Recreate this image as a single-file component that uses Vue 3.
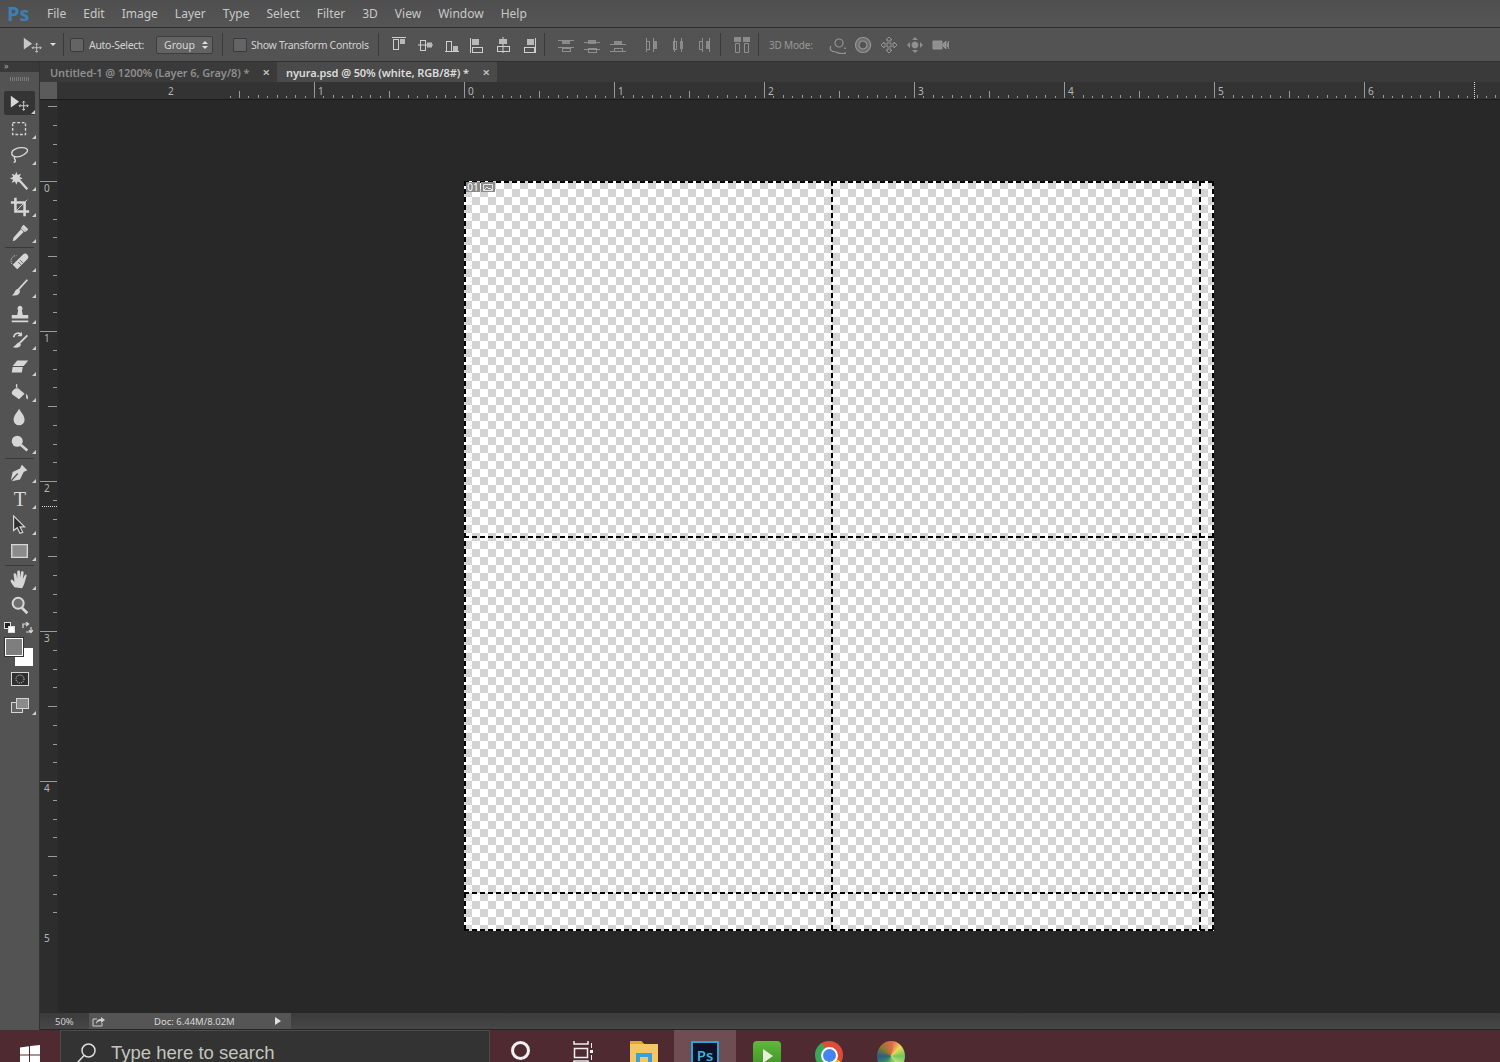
<script setup>
const menus = ['File', 'Edit', 'Image', 'Layer', 'Type', 'Select', 'Filter', '3D', 'View', 'Window', 'Help']

// photoshop tool strip, grouped like the real panel
const toolGroups = [
  [
    { corner: true, active: true, parts: [{ d: 'M2 4v13l9-6.500z', fill: 1 }, { d: 'M16 10v10M11 15h10M14.500 11.500l1.500-1.500 1.500 1.500M14.500 18.500l1.500 1.500 1.500-1.500M12.500 13.500l-1.500 1.500 1.500 1.500M19.500 13.500l1.500 1.500-1.500 1.500', sw: 1 }] },
    { corner: true, parts: [{ d: 'M4 5h14v13H4z', sw: 1.500, dash: '3 2' }] },
    { corner: true, parts: [{ d: 'M3 10c0-4 6-6 11-6s7 2 6 4-6 6-11 6-6-2-6-4zM6 14c-1 2 1 3 1 4s-1 2-2 2', sw: 1.500 }] },
    { corner: true, parts: [{ d: 'M8 2l1.500 3.500L13 4l-1.500 3.500L15 9l-3.500 1.500L13 14l-3.500-1.500L8 16l-1.500-3.500L3 14l1.500-3.500L1 9l3.500-1.500L3 4l3.500 1.500z', fill: 1 }, { d: 'M11 11l9 10', sw: 2.500 }] },
    { corner: true, parts: [{ d: 'M7 2v15h15M2 7h15v15', sw: 2.800 }, { d: 'M7 17L20 4', sw: 1 }] },
    { corner: true, parts: [{ d: 'M14 5l5 5-2 1-4-4zM13 8l3 3-9 9-3 1 1-4z', fill: 1 }, { d: 'M16 3l5 5-2 2-5-5z', fill: 1 }] },
  ],
  [
    { corner: true, parts: [{ d: 'M9 20l-5-5L15 4c2-2 4-1 5 0s2 3 0 5z', fill: 1 }, { d: 'M3 14c-2-4 0-9 5-9', sw: 1, dash: '1 1' }, { d: 'M10 12l3 3M12 10l3 3', sw: 1, dark: 1 }] },
    { corner: true, parts: [{ d: 'M20 3L10 14', sw: 2 }, { d: 'M10 13c-4 0-3 5-7 7 6 1 9-1 9-5z', fill: 1 }] },
    { corner: true, parts: [{ d: 'M12 3a3 3 0 0 1 2 5l1 5h6v4H3v-4h6l1-5a3 3 0 0 1 2-5zM3 19h18v2H3z', fill: 1 }] },
    { corner: true, parts: [{ d: 'M5 9c1-5 7-6 9-2', sw: 1.800 }, { d: 'M14 3v5H9z', fill: 1 }, { d: 'M20 7L11 16', sw: 2 }, { d: 'M11 15c-3 0-3 3-7 5 5 1 9 0 9-3z', fill: 1 }] },
    { corner: true, parts: [{ d: 'M9 6h12l-5 6H4z', fill: 1 }, { d: 'M4 13h11l-1 6H3z', fill: 1 }] },
    { corner: true, parts: [{ d: 'M9 7l8 7-6 6-7-5c-2-2-1-5 5-8zM9 3c-2 0-2 4 0 6', fill: 1 }, { d: 'M19 14c2 2 2 6 1 6s-2-3-1-6z', fill: 1 }] },
    { corner: false, parts: [{ d: 'M11 2c3 5 6 8 6 12a6 6 0 0 1-12 0c0-4 3-7 6-12z', fill: 1 }] },
    { corner: true, parts: [{ d: 'M9 3a6 6 0 1 1 0 12A6 6 0 0 1 9 3z', fill: 1 }, { d: 'M13 13l7 6', sw: 2.800 }] },
  ],
  [
    { corner: true, parts: [{ d: 'M14 3l6 6-4 2-4 8-9 2 7-8-1-1-7 8 2-9 8-4z', fill: 1 }] },
    { corner: true, parts: [{ text: 'T' }] },
    { corner: true, parts: [{ d: 'M5 2v16l4-3 3 6 3-1-3-6h5z', sw: 1.300, darkFill: 1 }] },
    { corner: true, parts: [{ d: 'M3 5h17v14H3z', rectFill: 1 }] },
  ],
  [
    { corner: true, parts: [{ d: 'M6 20c-2-3-5-6-4-8s3 1 4 2l-1-8c0-2 2-2 3 0l1 5V3c0-2 3-2 3 0v7l1-6c0-2 3-2 3 0l-1 7 2-4c1-2 3-1 2 1l-2 7c-1 3-2 5-3 6z', fill: 1 }] },
    { corner: false, parts: [{ d: 'M10 3a6 6 0 1 1 0 12A6 6 0 0 1 10 3z', sw: 2.200, glass: 1 }, { d: 'M14 14l6 6', sw: 3 }] },
  ],
]

const alignIcons = [
  [
    { line: 'M1 1.500h14', box: [2, 3, 5, 10], solid: [9, 3, 5, 5] },
    { line: 'M1 9h15', box: [3, 4, 5, 10], solid: [10, 6.500, 5, 5] },
    { line: 'M2 15.500h14', box: [3, 5, 5, 10], solid: [10, 10, 5, 5] },
  ],
  [
    { line: 'M2.500 2v15', box: [4, 11, 10, 5], solid: [4, 3, 7, 6] },
    { line: 'M9 1v16', box: [3, 10, 12, 5], solid: [5, 3, 8, 5] },
    { line: 'M15.500 2v15', box: [4, 11, 10, 5], solid: [7, 3, 7, 6] },
  ],
]
const distIcons = [
  [
    { line: 'M1 4.500h16M1 11.500h16', box: [5, 12, 8, 3], solid: [5, 5, 8, 3] },
    { line: 'M1 6.500h16M1 13.500h16', box: [5, 12, 8, 4], solid: [5, 4, 8, 4] },
    { line: 'M1 8.500h16M1 15.500h16', box: [5, 12, 8, 3], solid: [5, 5, 8, 3] },
  ],
  [
    { line: 'M3.500 2v14M10.500 2v14', box: [3, 5, 3, 8], solid: [11, 5, 3, 8] },
    { line: 'M5.500 2v14M12.500 2v14', box: [4, 5, 3, 8], solid: [11, 5, 3, 8] },
    { line: 'M7.500 2v14M14.500 2v14', box: [4, 5, 3, 8], solid: [11, 5, 3, 8] },
  ],
]

const objects3d = [
  { d: 'M3 10c-2 3 0 6 5 6 3 2 9 2 11 0 1-2 0-4-3-4M7 7a4 4 0 1 1 8 0 4 4 0 0 1-8 0z', sw: 1.200 },
  { d: 'M9 1.500a7.500 7.500 0 1 0 .1 0zM9 5a4 4 0 1 1-.1 0z', sw: 1.200, fill: 1 },
  { d: 'M9 1l3 3h-2v4h4V6l3 3-3 3v-2h-4v4h2l-3 3-3-3h2v-4H4v2L1 9l3-3v2h4V4H6z', sw: 1 },
  { d: 'M9 1l3 3H6zM9 17l-3-3h6zM1 9l3-3v6zM17 9l-3 3V6zM9 5.500a3.500 3.500 0 1 1-.1 0z', solid: 1 },
  { d: 'M1 5h9v8H1zM11 8l3-3v8l-3-3zM17 5l-2 4 2 4', cam: 1 },
]

const INCH = 150
const SIXTEENTH = INCH / 16

// x of ruler origin sits at 464 on screen, ruler svg begins at 40
const hOrigin = 424
const hTicks = []
for (let i = -25; i < 160; i++) {
  const x = hOrigin + i * SIXTEENTH
  if (x < 17) continue
  const n = ((i % 16) + 16) % 16
  const len = n === 0 ? 17 : n === 8 ? 8 : n % 2 === 0 ? 4 : 3
  hTicks.push({ x: Math.round(x) + 0.5, len })
}
const hLabels = [-2, -1, 0, 1, 2, 3, 4, 5, 6].map((n) => ({
  x: hOrigin + n * INCH + 4,
  text: Math.abs(n),
}))

// y of origin is 181 on screen, svg begins at 100
const vOrigin = 81
const vTicks = []
for (let i = -4; i < 40; i++) {
  const y = vOrigin + i * (INCH / 8)
  if (y < 0 || y > 913) continue
  const n = ((i % 8) + 8) % 8
  const len = n === 0 ? 17 : n === 4 ? 9 : 4
  vTicks.push({ y: Math.round(y) + 0.5, len })
}
const vLabels = [0, 1, 2, 3, 4, 5].map((n) => ({ y: vOrigin + n * INCH + 11, text: n }))

const sliceLines = [
  { x1: 368, y1: 0, x2: 368, y2: 750 },
  { x1: 736, y1: 0, x2: 736, y2: 750 },
  { x1: 0, y1: 356, x2: 750, y2: 356 },
  { x1: 0, y1: 712, x2: 750, y2: 712 },
  { x1: 1, y1: 0, x2: 1, y2: 750 },
  { x1: 749, y1: 0, x2: 749, y2: 750 },
  { x1: 0, y1: 1, x2: 750, y2: 1 },
  { x1: 0, y1: 749, x2: 750, y2: 749 },
]
</script>

<template>
  <div class="app">
    <header class="menubar">
      <span class="logo">Ps</span>
      <nav class="menus">
        <span v-for="m in menus" :key="m">{{ m }}</span>
      </nav>
    </header>

    <div class="optionsbar">
      <svg class="opt-move" width="22" height="22" viewBox="0 0 24 24">
        <path d="M2 4v13l9-6.500z" fill="#c8c8c8" />
        <path d="M16 10v10M11 15h10M14.500 11.500l1.500-1.500 1.500 1.500M14.500 18.500l1.500 1.500 1.500-1.500M12.500 13.500l-1.500 1.500 1.500 1.500M19.500 13.500l1.500 1.500-1.500 1.500" fill="none" stroke="#c8c8c8" />
      </svg>
      <span class="caret"></span>
      <i class="sep sep-a"></i>
      <span class="check"></span>
      <span class="opt-label auto">Auto-Select:</span>
      <span class="dropdown">Group<span class="updown"><b></b><b></b></span></span>
      <i class="sep sep-b"></i>
      <span class="check check-b"></span>
      <span class="opt-label show">Show Transform Controls</span>
      <i class="sep sep-c"></i>

      <div v-for="(grp, g) in alignIcons" :key="'a' + g" class="icon-group" :class="{ first: g === 0 }">
        <svg v-for="(ic, i) in grp" :key="i" width="18" height="18" viewBox="0 0 18 18" class="opt-icon">
          <path :d="ic.line" stroke="#d0d0d0" fill="none" />
          <rect :x="ic.box[0] + 0.5" :y="ic.box[1] + 0.5" :width="ic.box[2]" :height="ic.box[3]" fill="none" stroke="#cfcfcf" />
          <rect :x="ic.solid[0]" :y="ic.solid[1]" :width="ic.solid[2]" :height="ic.solid[3]" fill="#b9b9b9" />
        </svg>
      </div>
      <i class="sep sep-d"></i>

      <div v-for="(grp, g) in distIcons" :key="'d' + g" class="icon-group" :class="g === 0 ? 'dist-first' : 'dist-next'">
        <svg v-for="(ic, i) in grp" :key="i" width="18" height="18" viewBox="0 0 18 18" class="opt-icon">
          <path :d="ic.line" stroke="#8f8f8f" fill="none" />
          <rect :x="ic.box[0] + 0.5" :y="ic.box[1] + 0.5" :width="ic.box[2]" :height="ic.box[3]" fill="none" stroke="#8f8f8f" />
          <rect :x="ic.solid[0]" :y="ic.solid[1]" :width="ic.solid[2]" :height="ic.solid[3]" fill="#8a8a8a" />
        </svg>
      </div>
      <i class="sep sep-e"></i>

      <svg class="opt-icon auto-align" width="18" height="18" viewBox="0 0 18 18">
        <rect x="1" y="1" width="7" height="5" fill="#8a8a8a" />
        <rect x="10" y="1" width="7" height="5" fill="#8a8a8a" />
        <path d="M2.500 7.500h4v9h-4zM11.500 7.500h4v9h-4z" fill="none" stroke="#8f8f8f" />
      </svg>
      <i class="sep sep-f"></i>
      <span class="mode-label">3D Mode:</span>
      <svg v-for="(o, i) in objects3d" :key="i" class="obj3d" width="18" height="18" viewBox="0 0 18 18">
        <path
          :d="o.d"
          :fill="o.solid || o.cam ? '#8f8f8f' : o.fill ? '#6e6e6e' : 'none'"
          :stroke="o.solid ? 'none' : '#959595'"
          :stroke-width="o.sw || 1"
        />
      </svg>
    </div>

    <div class="workspace">
      <aside class="toolstrip">
        <div class="strip-head">
          <span class="chev">»</span>
        </div>
        <div class="strip-grip"></div>

        <template v-for="(group, g) in toolGroups" :key="g">
          <i v-if="g > 0" class="tool-sep"></i>
          <div v-for="(tool, t) in group" :key="t" class="tool" :class="{ active: tool.active }">
            <svg width="22" height="22" viewBox="0 0 24 24" class="tool-icon">
              <template v-for="(p, k) in tool.parts" :key="k">
                <text v-if="p.text" x="12" y="20" class="type-t" text-anchor="middle">{{ p.text }}</text>
                <path
                  v-else
                  :d="p.d"
                  :fill="p.fill ? '#d6d6d6' : p.darkFill ? '#2e2e2e' : p.rectFill ? '#8b8b8b' : p.glass ? '#6f6f6f' : 'none'"
                  :stroke="p.fill ? 'none' : p.dark ? '#555' : '#d6d6d6'"
                  :stroke-width="p.sw || 1.500"
                  :stroke-dasharray="p.dash || null"
                />
              </template>
            </svg>
            <span v-if="tool.corner" class="corner"></span>
          </div>
        </template>

        <div class="swatch-tools">
          <span class="mini-default"><b></b><b></b></span>
          <svg width="12" height="12" viewBox="0 0 12 12">
            <path d="M2 6V2h5M5 0L7.500 2 5 4M10 5v5H5M8 8l2 2.500L12 8" fill="none" stroke="#ddd" stroke-width="1.200" />
          </svg>
        </div>
        <div class="swatches">
          <span class="bg-swatch"></span>
          <span class="fg-swatch"></span>
        </div>
        <div class="tool">
          <svg width="18" height="14" viewBox="0 0 18 14">
            <rect x="0.500" y="0.500" width="17" height="13" fill="#2f2f2f" stroke="#d6d6d6" />
            <circle cx="9" cy="7" r="4" fill="none" stroke="#ddd" stroke-dasharray="1 1" />
          </svg>
        </div>
        <div class="tool">
          <svg width="18" height="15" viewBox="0 0 18 15">
            <rect x="0.500" y="4.500" width="11" height="10" fill="#666" stroke="#d6d6d6" />
            <rect x="5.500" y="0.500" width="12" height="10" fill="#8b8b8b" stroke="#d6d6d6" />
          </svg>
          <span class="corner"></span>
        </div>
      </aside>

      <div class="document">
        <div class="tabs">
          <div class="tab">
            <span class="tab-title">Untitled-1 @ 1200% (Layer 6, Gray/8) *</span>
            <span class="tab-close">×</span>
          </div>
          <div class="tab current">
            <span class="tab-title">nyura.psd @ 50% (white, RGB/8#) *</span>
            <span class="tab-close">×</span>
          </div>
        </div>

        <svg class="hruler" width="1460" height="18">
          <rect x="0" y="0" width="17" height="17" fill="#5b5b5b" />
          <path v-for="t in hTicks" :key="t.x" :d="`M${t.x} ${17 - t.len}V16`" stroke="#9a9a9a" />
          <text v-for="l in hLabels" :key="l.x" :x="l.x" y="13" class="rule-num">{{ l.text }}</text>
          <path d="M1434.500 0v17" stroke="#ddd" stroke-dasharray="1 1" />
        </svg>

        <div class="doc-body">
          <svg class="vruler" width="18" height="913">
            <path v-for="t in vTicks" :key="t.y" :d="`M${17 - t.len} ${t.y}H17`" stroke="#9a9a9a" />
            <text v-for="l in vLabels" :key="l.y" x="4" :y="l.y" class="rule-num">{{ l.text }}</text>
            <path d="M2 406.500H17" stroke="#ddd" stroke-dasharray="1 1" />
          </svg>
          <main class="pasteboard">
            <div class="canvas">
              <svg class="slices" width="750" height="750">
                <line
                  v-for="(s, i) in sliceLines"
                  :key="i"
                  :x1="s.x1"
                  :y1="s.y1"
                  :x2="s.x2"
                  :y2="s.y2"
                  stroke="#000"
                  stroke-width="2"
                  stroke-dasharray="5 3"
                />
              </svg>
              <div class="slice-badge">
                <span class="badge-num">01</span>
                <span class="badge-img">
                  <svg width="10" height="7" viewBox="0 0 10 7"><path d="M.500.500h9v6h-9zM1 6l3-3 2 2 1-1 2 2" fill="none" stroke="#fff" stroke-width=".8" /></svg>
                </span>
              </div>
            </div>
          </main>
        </div>

        <footer class="statusbar">
          <span class="zoom-val">50%</span>
          <div class="status-box">
            <svg width="14" height="11" viewBox="0 0 14 11">
              <path d="M1 3h4M1 3v7h9V7" fill="none" stroke="#ccc" />
              <path d="M4 8c0-3 2-5 5-5V1l4 3-4 3V5C7 5 5 6 4 8z" fill="#ccc" />
            </svg>
            <span class="doc-size">Doc: 6.44M/8.02M</span>
            <span class="status-arrow"></span>
          </div>
        </footer>
      </div>
    </div>

    <div class="taskbar">
      <div class="start">
        <svg width="20" height="20" viewBox="0 0 20 20"><path d="M0 2.500l9-1.200V9.500H0zM10 1.100L20 0v9.500H10zM0 10.500h9v8l-9-1.200zM10 10.500h10V20l-10-1.300z" fill="#fff" /></svg>
      </div>
      <div class="searchbox">
        <svg width="20" height="22" viewBox="0 0 20 22"><circle cx="11.500" cy="8.500" r="6.500" fill="none" stroke="#ddd" stroke-width="1.500" /><path d="M7 13.500L1 20" stroke="#ddd" stroke-width="1.500" /></svg>
        <span>Type here to search</span>
      </div>
      <div class="task cortana"><span class="ring"></span></div>
      <div class="task">
        <svg width="22" height="26" viewBox="0 0 22 26">
          <path d="M3 0v3h14V0M3.500 7.500h13v9h-13zM3 26v-6h14v6" fill="none" stroke="#eee" stroke-width="1.500" />
          <rect x="19" y="9" width="3" height="3" fill="#eee" /><path d="M20.500 2v5M20.500 14v5" stroke="#eee" />
        </svg>
      </div>
      <div class="task">
        <svg width="28" height="28" viewBox="0 0 28 28">
          <path d="M0 0h11l3 3h14v25H0z" fill="#f3c766" />
          <path d="M0 0h11l3 3H0z" fill="#e0a733" />
          <rect x="6" y="12" width="16" height="14" fill="#3fa0d8" />
          <rect x="10" y="16" width="8" height="6" fill="#f3c766" />
        </svg>
      </div>
      <div class="task running"><span class="ps-tile">Ps</span></div>
      <div class="task">
        <span class="green-tile"><svg width="12" height="16" viewBox="0 0 12 16"><path d="M1 1l10 7-10 7z" fill="#e6f2d8" /></svg></span>
      </div>
      <div class="task"><span class="chrome"><b></b></span></div>
      <div class="task"><span class="colorball"></span></div>
    </div>
  </div>
</template>

<style scoped>
.app {
  width: 1500px;
  height: 1062px;
  overflow: hidden;
  display: flex;
  flex-direction: column;
  font-family: "Noto Sans", "Open Sans", sans-serif;
  color: #cfcfcf;
  background: #282828;
}
.menubar {
  height: 28px;
  flex: none;
  display: flex;
  align-items: center;
  background: linear-gradient(#4f4f4f, #555);
  border-bottom: 1px solid #2e2e2e;
  box-sizing: border-box;
}
.logo {
  width: 47px;
  padding-left: 7px;
  box-sizing: border-box;
  font-family: "Open Sans", sans-serif;
  font-weight: 700;
  font-size: 20px;
  color: #3d7fb4;
}
.menus {
  display: flex;
  gap: 17px;
  font-size: 12px;
  color: #c9c9c9;
}
.optionsbar {
  height: 34px;
  flex: none;
  display: flex;
  align-items: center;
  background: #535353;
  border-bottom: 1px solid #2f2f2f;
  box-sizing: border-box;
  position: relative;
}
.opt-move { margin-left: 22px; }
.caret {
  width: 0;
  height: 0;
  margin-left: 6px;
  border: 3px solid transparent;
  border-top: 3px solid #ddd;
  border-bottom: 0;
}
.sep {
  width: 1px;
  height: 23px;
  background: #3a3a3a;
  flex: none;
}
.sep-a { margin-left: 7px; }
.sep-b { margin-left: 9px; }
.sep-c { margin-left: 14px; }
.sep-d { margin-left: 6px; }
.sep-e { margin-left: 7px; }
.sep-f { margin-left: 7px; }
.check {
  width: 12px;
  height: 12px;
  margin-left: 6px;
  border: 1px solid #3a3a3a;
  border-radius: 2px;
  background: #646464;
  flex: none;
}
.check-b { margin-left: 10px; }
.opt-label {
  font-size: 10.500px;
  letter-spacing: -0.300px;
  color: #d2d2d2;
  white-space: nowrap;
}
.auto { margin-left: 5px; width: 54px; }
.show { margin-left: 4px; width: 113px; }
.dropdown {
  width: 57px;
  height: 18px;
  margin-left: 13px;
  box-sizing: border-box;
  display: flex;
  align-items: center;
  justify-content: space-between;
  padding: 0 4px 0 7px;
  background: #636363;
  border: 1px solid #3d3d3d;
  border-radius: 2px;
  font-size: 10.500px;
  color: #d8d8d8;
}
.updown {
  display: flex;
  flex-direction: column;
  gap: 2px;
}
.updown b {
  width: 0;
  height: 0;
  border: 3px solid transparent;
  border-bottom: 3px solid #ddd;
  border-top: 0;
}
.updown b + b {
  border-top: 3px solid #ddd;
  border-bottom: 0;
}
.icon-group {
  display: flex;
  gap: 8px;
  margin-left: 7px;
}
.icon-group.first { margin-left: 12px; }
.icon-group.dist-first { margin-left: 12px; }
.icon-group.dist-next { margin-left: 16px; }
.auto-align { margin-left: 12px; }
.mode-label {
  margin-left: 10px;
  width: 43px;
  font-size: 10px;
  letter-spacing: -0.200px;
  color: #999;
  white-space: nowrap;
}
.obj3d { margin-left: 8px; }
.mode-label + .obj3d { margin-left: 16px; }

.workspace {
  flex: 1;
  display: flex;
  min-height: 0;
}
.toolstrip {
  width: 40px;
  flex: none;
  display: flex;
  flex-direction: column;
  box-sizing: border-box;
  background: #535353;
  border-right: 1px solid #333;
}
.strip-head {
  height: 10px;
  background: #3a3a3a;
  line-height: 8px;
  font-size: 9px;
  color: #aaa;
  padding-left: 4px;
}
.strip-grip {
  height: 18px;
  background: repeating-linear-gradient(90deg, #7a7a7a 0 1px, transparent 1px 2px) 10px 5px / 19px 4px no-repeat;
}
.tool {
  height: 26px;
  flex: none;
  position: relative;
  display: flex;
  align-items: center;
  justify-content: center;
}
.tool.active {
  margin: 1px 4px;
  height: 24px;
  background: #343434;
  border-radius: 2px;
}
.corner {
  position: absolute;
  right: 3px;
  bottom: 3px;
  width: 0;
  height: 0;
  border-left: 4px solid transparent;
  border-bottom: 4px solid #cfcfcf;
}
.active .corner { right: 0; bottom: 1px; }
.tool-sep {
  height: 1px;
  flex: none;
  margin: 1px 5px;
  background: #3a3a3a;
}
.type-t {
  font-family: "Liberation Serif", serif;
  font-size: 22px;
  fill: #dcdcdc;
}
.swatch-tools {
  height: 17px;
  flex: none;
  display: flex;
  align-items: center;
  justify-content: space-between;
  padding: 0 6px 0 4px;
}
.mini-default {
  position: relative;
  width: 11px;
  height: 11px;
}
.mini-default b {
  position: absolute;
  width: 7px;
  height: 7px;
  left: 0;
  top: 0;
  background: #222;
  border: 1px solid #ddd;
  box-sizing: border-box;
}
.mini-default b + b {
  left: 4px;
  top: 4px;
  background: #fff;
}
.swatches {
  height: 30px;
  flex: none;
  position: relative;
}
.fg-swatch,
.bg-swatch {
  position: absolute;
  width: 18px;
  height: 18px;
  box-sizing: border-box;
  border: 1px solid #fff;
}
.fg-swatch {
  left: 5px;
  top: 2px;
  background: #7e7e7e;
  outline: 1px solid #333;
}
.bg-swatch {
  left: 15px;
  top: 12px;
  background: #fff;
}

.document {
  flex: 1;
  min-width: 0;
  display: flex;
  flex-direction: column;
}
.tabs {
  height: 20px;
  flex: none;
  display: flex;
  background: #3a3a3a;
  font-size: 11px;
  font-weight: 600;
}
.tab {
  width: 237px;
  box-sizing: border-box;
  padding: 0 7px 0 10px;
  display: flex;
  align-items: center;
  justify-content: space-between;
  color: #8e8e8e;
  white-space: nowrap;
}
.tab-title { letter-spacing: -0.100px; }
.tab-close {
  color: #c8c8c8;
  font-size: 13px;
}
.tab.current {
  width: 220px;
  padding-left: 9px;
  background: #4a4a4a;
  color: #dcdcdc;
}
.hruler {
  display: block;
  flex: none;
  background: #333;
  border-bottom: 1px solid #1c1c1c;
  box-sizing: border-box;
}
.rule-num {
  font-family: "Noto Sans", sans-serif;
  font-size: 10px;
  fill: #b5b5b5;
}
.doc-body {
  flex: 1;
  min-height: 0;
  display: flex;
}
.vruler {
  display: block;
  flex: none;
  background: #2d2d2d;
}
.pasteboard {
  flex: 1;
  padding: 81px 0 0 406px;
  background: #282828;
  box-sizing: border-box;
  overflow: hidden;
}
.canvas {
  position: relative;
  width: 750px;
  height: 750px;
  background-color: #fff;
  background-image: conic-gradient(#d4d4d4 25%, #fff 25% 50%, #d4d4d4 50% 75%, #fff 75%);
  background-size: 16px 16px;
}
.slices {
  position: absolute;
  left: 0;
  top: 0;
  display: block;
}
.slice-badge {
  position: absolute;
  left: 2px;
  top: 1px;
  display: flex;
  gap: 1px;
  font-size: 10px;
  line-height: 10px;
  color: #fff;
}
.badge-num,
.badge-img {
  height: 10px;
  width: 14px;
  background: #8b8b8b;
  text-align: center;
}
.badge-img svg { display: block; margin: 1.500px auto 0; }
.statusbar {
  height: 17px;
  flex: none;
  display: flex;
  align-items: center;
  background: linear-gradient(#3b3b3b, #474747);
  border-bottom: 1px solid #252525;
  box-sizing: border-box;
  font-size: 9.500px;
}
.zoom-val {
  width: 49px;
  padding-left: 15px;
  box-sizing: border-box;
  color: #d0d0d0;
}
.status-box {
  width: 202px;
  height: 16px;
  display: flex;
  align-items: center;
  padding-left: 3px;
  box-sizing: border-box;
  background: #555;
}
.doc-size {
  margin-left: 48px;
  width: 110px;
  color: #d8d8d8;
}
.status-arrow {
  margin-left: 11px;
  width: 0;
  height: 0;
  border-left: 6px solid #e0e0e0;
  border-top: 4.500px solid transparent;
  border-bottom: 4.500px solid transparent;
}

.taskbar {
  height: 32px;
  flex: none;
  display: flex;
  background: #4f2b31;
  overflow: hidden;
}
.start {
  width: 60px;
  height: 50px;
  flex: none;
  padding: 15px 0 0 20px;
  box-sizing: border-box;
}
.searchbox {
  width: 430px;
  height: 50px;
  flex: none;
  box-sizing: border-box;
  display: flex;
  gap: 14px;
  padding: 11px 0 0 16px;
  background: #333;
  border: 1px solid #4c4c4c;
  border-bottom: 0;
  font-family: "Liberation Sans", sans-serif;
  font-size: 18.500px;
  line-height: 22px;
  color: #c4c6bd;
}
.task {
  width: 62px;
  flex: none;
  display: flex;
  justify-content: center;
  padding-top: 11px;
  box-sizing: border-box;
}
.cortana { margin-left: -1px; }
.ring {
  width: 19px;
  height: 19px;
  flex: none;
  box-sizing: border-box;
  border: 3px solid #f0f0f0;
  border-radius: 50%;
}
.running {
  background: #6e4e52;
  margin-left: -1px;
}
.ps-tile {
  width: 28px;
  height: 30px;
  flex: none;
  box-sizing: border-box;
  background: #0d1327;
  border: 2px solid #2fa3d6;
  font-family: "Open Sans", sans-serif;
  font-weight: 600;
  font-size: 15px;
  line-height: 24px;
  text-align: center;
  color: #3db3e6;
}
.green-tile {
  width: 28px;
  height: 30px;
  flex: none;
  border-radius: 4px;
  display: flex;
  align-items: center;
  justify-content: center;
  padding-left: 2px;
  box-sizing: border-box;
  background: linear-gradient(#5fb83c, #3d8d22);
}
.chrome {
  width: 28px;
  height: 28px;
  flex: none;
  border-radius: 50%;
  display: flex;
  align-items: center;
  justify-content: center;
  background: conic-gradient(#dd4b39 0 120deg, #f4c20d 120deg 210deg, #3aa757 210deg 330deg, #dd4b39 330deg);
}
.chrome b {
  width: 13px;
  height: 13px;
  box-sizing: border-box;
  border-radius: 50%;
  background: #4285f4;
  outline: 2px solid #fff;
}
.colorball {
  width: 28px;
  height: 30px;
  flex: none;
  border-radius: 50%;
  background: conic-gradient(#e25b4a, #e8d95a, #72c85e, #b8dc77, #6bb96a, #3a8a5e, #2b5f80, #8f7a2a, #d96a4e);
}
</style>

<style>
html, body {
  margin: 0;
  background: #282828;
}
</style>
